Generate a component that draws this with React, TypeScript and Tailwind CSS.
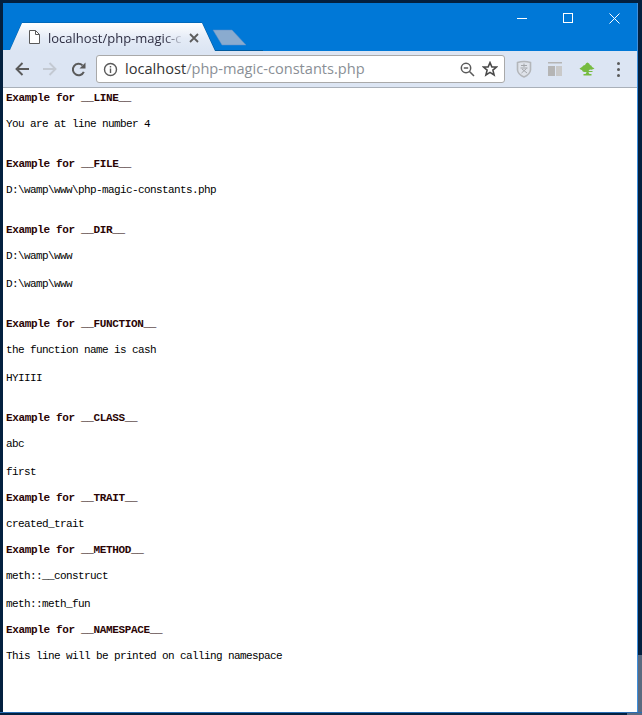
const lines: { text: string; bold?: boolean; gap: string }[] = [
  { text: "Example for __LINE__", bold: true, gap: "mt-0" },
  { text: "You are at line number 4", gap: "mt-3" },
  { text: "Example for __FILE__", bold: true, gap: "mt-[26px]" },
  { text: "D:\\wamp\\www\\php-magic-constants.php", gap: "mt-3" },
  { text: "Example for __DIR__", bold: true, gap: "mt-[26px]" },
  { text: "D:\\wamp\\www", gap: "mt-3" },
  { text: "D:\\wamp\\www", gap: "mt-[14px]" },
  { text: "Example for __FUNCTION__", bold: true, gap: "mt-[26px]" },
  { text: "the function name is cash", gap: "mt-3" },
  { text: "HYIIII", gap: "mt-[14px]" },
  { text: "Example for __CLASS__", bold: true, gap: "mt-[26px]" },
  { text: "abc", gap: "mt-3" },
  { text: "first", gap: "mt-[14px]" },
  { text: "Example for __TRAIT__", bold: true, gap: "mt-3" },
  { text: "created_trait", gap: "mt-3" },
  { text: "Example for __METHOD__", bold: true, gap: "mt-3" },
  { text: "meth::__construct", gap: "mt-3" },
  { text: "meth::meth_fun", gap: "mt-[14px]" },
  { text: "Example for __NAMESPACE__", bold: true, gap: "mt-3" },
  { text: "This line will be printed on calling namespace", gap: "mt-3" },
];

function TabStrip() {
  return (
    <div className="relative h-[48px] bg-[#0078d7]">
      <svg className="absolute left-0 top-0" width="260" height="48" viewBox="0 0 260 48">
        <defs>
          <linearGradient id="tabfill" x1="0" y1="0" x2="0" y2="1">
            <stop offset="0" stopColor="#ffffff" />
            <stop offset="0.55" stopColor="#e4ebf6" />
            <stop offset="1" stopColor="#dce5f3" />
          </linearGradient>
        </defs>
        <path d="M0 47.500H7L19 20H199L212 47.500H260" fill="none" stroke="#005a9e" strokeWidth="1" />
        <path d="M0 48V47H7L19 20H199L212 48Z" fill="url(#tabfill)" />
        <path d="M210 27H229L243 42H219Z" fill="#8aabcf" stroke="#5f8fc4" strokeWidth="0.5" />
      </svg>
      <svg className="absolute left-[26px] top-[27px]" width="11" height="14" viewBox="0 0 11 14" fill="none" stroke="#5a5a5a">
        <path d="M0.500 0.500H6.500L10.500 4.500V13.500H0.500Z" fill="#fff" />
        <path d="M6.500 0.500V4.500H10.500" />
      </svg>
      <span className="absolute left-[45px] top-[26px] w-[136px] whitespace-nowrap font-['Open_Sans',sans-serif] text-[13px] leading-[18px] text-[#2e2e42] [mask-image:linear-gradient(to_right,black_85%,transparent)]">
        localhost/php-magic-c
      </span>
      <svg className="absolute left-[186px] top-[30px]" width="10" height="10" viewBox="0 0 10 10" stroke="#5c5c5c" strokeWidth="1.8">
        <path d="M1 1L9 9M9 1L1 9" />
      </svg>
      <div className="absolute right-0 top-0 flex h-[30px] items-center text-white">
        <div className="flex w-[46px] justify-center">
          <div className="h-px w-[10px] bg-white" />
        </div>
        <div className="flex w-[46px] justify-center">
          <div className="size-[10px] border border-white" />
        </div>
        <div className="flex w-[46px] justify-center">
          <svg width="11" height="11" viewBox="0 0 11 11" stroke="#fff" strokeWidth="1">
            <path d="M0.500 0.500L10.500 10.500M10.500 0.500L0.500 10.500" />
          </svg>
        </div>
      </div>
    </div>
  );
}

function Toolbar() {
  return (
    <div className="flex h-[37px] items-center border-b border-[#a9b0b9] bg-[#dce5f3]">
      <div className="flex w-[93px] items-center pl-[12px]">
        <svg width="14" height="14" viewBox="0 0 14 14" fill="none" stroke="#5a5a5a" strokeWidth="1.900">
          <path d="M14 7H1.500M7.500 1L1.500 7L7.500 13" />
        </svg>
        <svg className="ml-[14px]" width="14" height="14" viewBox="0 0 14 14" fill="none" stroke="#c3c9d2" strokeWidth="1.900">
          <path d="M0 7H12.500M6.500 1L12.500 7L6.500 13" />
        </svg>
        <svg className="ml-[14px]" width="15" height="15" viewBox="0 0 15 15" fill="none">
          <path d="M12.800 9.800A5.700 5.700 0 1 1 11.500 3.400" stroke="#5a5a5a" strokeWidth="2" />
          <path d="M14.500 0.500V6.500H8.500Z" fill="#5a5a5a" />
        </svg>
      </div>
      <div className="flex h-[28px] w-[409px] items-center rounded-[3px] border border-[#a9a9a9] bg-white pl-[6px] pr-[6px] font-['Open_Sans',sans-serif] text-[14.6px]">
        <svg width="15" height="15" viewBox="0 0 15 15" fill="none" stroke="#5a5a5a" strokeWidth="1.400">
          <circle cx="7.500" cy="7.500" r="6" />
          <path d="M7.500 6.500V11M7.500 4V5.400" />
        </svg>
        <span className="ml-[7px] text-[#333333]">localhost</span>
        <span className="text-[#8a8f96]">/php-magic-constants.php</span>
        <svg className="ml-auto" width="15" height="15" viewBox="0 0 15 15" fill="none" stroke="#5a5a5a" strokeWidth="1.500">
          <circle cx="6" cy="6" r="4.700" />
          <path d="M3.800 6H8.200M9.500 9.500L14 14" />
        </svg>
        <svg className="ml-[7px]" width="16" height="16" viewBox="0 0 16 16" fill="none" stroke="#4a4a4a" strokeWidth="1.600">
          <path d="M8 1.600L9.900 6H14.600L10.900 9.100L12.100 14L8 11.400L3.900 14L5.100 9.100L1.400 6H6.100Z" />
        </svg>
      </div>
      <svg className="ml-[11px]" width="16" height="18" viewBox="0 0 16 18" fill="none">
        <path d="M1.500 2.500Q8 0.500 14.500 2.500V10Q14 14.500 8 17Q2 14.500 1.500 10Z" stroke="#b3b6ba" strokeWidth="1.600" fill="#dfe3ea" />
        <path d="M5 5.500H11M8 3.500V7M4.500 8H11.500M5.500 13L10.500 8.500M6 9L11 13" stroke="#a3a6aa" strokeWidth="1" />
      </svg>
      <svg className="ml-[15px]" width="16" height="16" viewBox="0 0 16 16">
        <path d="M1 1H15V2.500H1Z" fill="#b5b5b5" />
        <path d="M1 5H8V15H1Z" fill="#b5b5b5" />
        <path d="M9 5H15V15H9Z" fill="#c9c9c9" />
      </svg>
      <svg className="ml-[16px]" width="16" height="14" viewBox="0 0 16 14">
        <path d="M0.500 6.500Q2.500 5.500 3.500 4.500Q4 3 6 3Q7 0.500 8.500 0.500Q10.500 1 11 3Q13 3.500 13 5Q14.500 5.500 15.500 6.500Q13.500 8 11 7.500Q10 8 9.500 9H13.500V10H9.500Q9.500 11 10.500 12H12.500V13.500H4.500V12H6.500Q7.500 11 7.500 10H5Q3 9.500 3 8Q2 8 0.500 6.500Z" fill="#76bb40" />
      </svg>
      <div className="ml-[22px] flex flex-col gap-[3px]">
        <div className="size-[3px] rounded-full bg-[#5a5a5a]" />
        <div className="size-[3px] rounded-full bg-[#5a5a5a]" />
        <div className="size-[3px] rounded-full bg-[#5a5a5a]" />
      </div>
    </div>
  );
}

export default function App() {
  return (
    <div className="flex h-[715px] w-[642px] flex-col bg-[#03203f]">
      <div className="flex flex-1 pl-[3px] pt-[3px]">
        <div className="flex w-[635px] flex-col border-r border-[#3f8fdc] bg-white">
          <TabStrip />
          <Toolbar />
          <div className="flex-1 pl-[3px] pt-[3px] font-['Liberation_Mono',monospace] text-[11px] tracking-[-0.6px] text-black">
            {lines.map((line, i) => (
              <p
                key={i}
                className={`h-[14px] leading-[14px] ${line.gap} ${line.bold ? "font-bold tracking-[-0.35px] text-[#2a0505]" : ""}`}
              >
                {line.text}
              </p>
            ))}
          </div>
        </div>
        <div className="flex w-[4px] flex-col">
          <div className="h-[652px] bg-[#03203f]" />
          <div className="flex-1 bg-[#5a6a80]" />
        </div>
      </div>
      <div className="flex h-[3px] border-t border-[#2a6db5]">
        <div className="w-[627px]" />
        <div className="flex-1 bg-[#5a6a80]" />
      </div>
    </div>
  );
}
